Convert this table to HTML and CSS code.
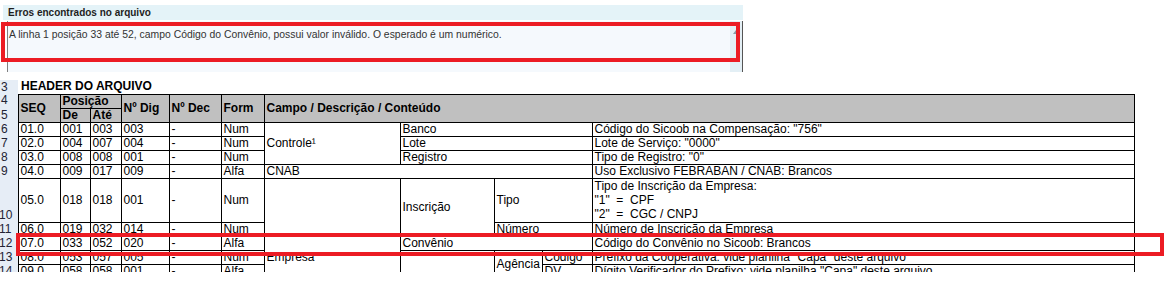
FILE: index.html
```html
<!DOCTYPE html>
<html lang="pt-BR">
<head>
<meta charset="utf-8">
<title>Erros encontrados no arquivo</title>
<link rel="stylesheet" href="styles.css">
</head>
<body>
<div class="page">
  <section class="errors">
    <div class="errors-title">Erros encontrados no arquivo</div>
    <div class="errors-box">
      <div class="errors-text">A linha 1 posição 33 até 52, campo Código do Convênio, possui valor inválido. O esperado é um numérico.</div>
      <div class="scrollbar"><span class="scroll-arrow"></span></div>
    </div>
  </section>

  <section class="sheet">
    <table class="grid">
      <colgroup>
        <col class="c-rn"><col class="c-seq"><col class="c-de"><col class="c-ate"><col class="c-dig"><col class="c-dec"><col class="c-form">
        <col class="c-f1"><col class="c-f2"><col class="c-f3"><col class="c-f4"><col class="c-desc">
      </colgroup>
      <tr>
        <td class="rn">3</td>
        <td class="sheet-title" colspan="11">HEADER DO ARQUIVO</td>
      </tr>
      <tr>
        <td class="rn rn-top">4</td>
        <th rowspan="2">SEQ</th>
        <th colspan="2" class="pos">Posição</th>
        <th rowspan="2">Nº Dig</th>
        <th rowspan="2">Nº Dec</th>
        <th rowspan="2">Form</th>
        <th rowspan="2" colspan="5">Campo / Descrição / Conteúdo</th>
      </tr>
      <tr>
        <td class="rn">5</td>
        <th>De</th>
        <th>Até</th>
      </tr>
      <tr>
        <td class="rn">6</td>
        <td>01.0</td><td>001</td><td>003</td><td>003</td><td>-</td><td>Num</td>
        <td rowspan="3">Controle¹</td>
        <td colspan="3">Banco</td>
        <td>Código do Sicoob na Compensação: "756"</td>
      </tr>
      <tr>
        <td class="rn">7</td>
        <td>02.0</td><td>004</td><td>007</td><td>004</td><td>-</td><td>Num</td>
        <td colspan="3">Lote</td>
        <td>Lote de Serviço: "0000"</td>
      </tr>
      <tr>
        <td class="rn">8</td>
        <td>03.0</td><td>008</td><td>008</td><td>001</td><td>-</td><td>Num</td>
        <td colspan="3">Registro</td>
        <td>Tipo de Registro: "0"</td>
      </tr>
      <tr>
        <td class="rn">9</td>
        <td>04.0</td><td>009</td><td>017</td><td>009</td><td>-</td><td>Alfa</td>
        <td colspan="4">CNAB</td>
        <td>Uso Exclusivo FEBRABAN / CNAB: Brancos</td>
      </tr>
      <tr class="tall">
        <td class="rn rn-wide">10</td>
        <td>05.0</td><td>018</td><td>018</td><td>001</td><td>-</td><td>Num</td>
        <td rowspan="5" class="empresa">Empresa</td>
        <td rowspan="2">Inscrição</td>
        <td colspan="2">Tipo</td>
        <td class="desc-lines">Tipo de Inscrição da Empresa:<br>"1"&nbsp; = &nbsp;CPF<br>"2"&nbsp; = &nbsp;CGC / CNPJ</td>
      </tr>
      <tr>
        <td class="rn rn-wide">11</td>
        <td>06.0</td><td>019</td><td>032</td><td>014</td><td>-</td><td>Num</td>
        <td colspan="2">Número</td>
        <td>Número de Inscrição da Empresa</td>
      </tr>
      <tr>
        <td class="rn rn-wide">12</td>
        <td>07.0</td><td>033</td><td>052</td><td>020</td><td>-</td><td>Alfa</td>
        <td colspan="3">Convênio</td>
        <td>Código do Convênio no Sicoob: Brancos</td>
      </tr>
      <tr>
        <td class="rn rn-wide">13</td>
        <td>08.0</td><td>053</td><td>057</td><td>005</td><td>-</td><td>Num</td>
        <td rowspan="2"></td>
        <td rowspan="2">Agência</td>
        <td>Código</td>
        <td>Prefixo da Cooperativa: vide planilha "Capa" deste arquivo</td>
      </tr>
      <tr>
        <td class="rn rn-wide">14</td>
        <td>09.0</td><td>058</td><td>058</td><td>001</td><td>-</td><td>Alfa</td>
        <td>DV</td>
        <td>Dígito Verificador do Prefixo: vide planilha "Capa" deste arquivo</td>
      </tr>
    </table>
  </section>

  <div class="mark mark-top"></div>
  <div class="mark mark-row"></div>
</div>
</body>
</html>
```

FILE: styles.css
```css
* { box-sizing: border-box; }
html, body { margin: 0; padding: 0; background: #fff; }
body { font-family: "Liberation Sans", Arial, sans-serif; color: #000; }

.page { position: relative; width: 1176px; height: 293px; overflow: hidden; }

/* error panel */
.errors { padding-top: 5px; }
.errors-title {
  margin-left: 3px; width: 740px; height: 15px; line-height: 16px;
  padding-left: 5px; background: #e4f3f8;
  font-size: 10px; font-weight: bold; color: #1e1e1e;
}
.errors-box {
  display: flex; margin: 1px 0 0 7px; width: 736px; height: 51px;
  background: #f5f9fd; border-left: 1px solid #808080;
}
.errors-text { flex: 1; padding: 7px 0 0 1px; font-size: 10.4px; line-height: 13px; color: #333; }
.scrollbar { width: 13px; background: #e3eff5; border-right: 1px solid #555; }
.scroll-arrow {
  display: block; margin: 9px 0 0 3px; width: 0; height: 0;
  border-left: 3px solid transparent; border-right: 3px solid transparent;
  border-bottom: 4px solid #8a9aa4;
}

/* spreadsheet */
.sheet { margin-top: 8px; height: 192px; overflow: hidden; }
.grid {
  table-layout: fixed; border-collapse: collapse; width: 1134px;
  font-size: 12px; line-height: 13px;
}
.c-rn { width: 18px; } .c-seq { width: 42px; } .c-de { width: 30px; } .c-ate { width: 31px; }
.c-dig { width: 48px; } .c-dec { width: 52px; } .c-form { width: 43px; }
.c-f1 { width: 136px; } .c-f2 { width: 94px; } .c-f3 { width: 48px; } .c-f4 { width: 50px; }
.c-desc { width: 542px; }

.grid tr { height: 14px; }
.grid tr.tall { height: 44px; }
.grid td, .grid th {
  border: 1px solid #000; padding: 0 0 0 2px;
  vertical-align: middle; text-align: left; white-space: nowrap; overflow: hidden;
}
.grid th { background: #c0c0c0; font-weight: bold; }
.grid td.rn {
  border: none; background: #e6edf6; vertical-align: bottom;
  padding-left: 1px; color: #223; overflow: visible;
}
.grid td.rn-top { vertical-align: top; }
.grid td.rn-wide { text-indent: -2px; }
.grid td.sheet-title { border: none; font-weight: bold; padding-left: 3px; }
.grid td.desc-lines { line-height: 14px; }
.grid td.empresa { vertical-align: top; padding-top: 72px; }

/* red annotations drawn over the screenshot */
.mark { position: absolute; border: 4px solid #ec1c24; }
.mark-top { left: 1px; top: 22px; width: 739px; height: 40px; }
.mark-row { left: 16px; top: 233px; width: 1148px; height: 23px; }
```
